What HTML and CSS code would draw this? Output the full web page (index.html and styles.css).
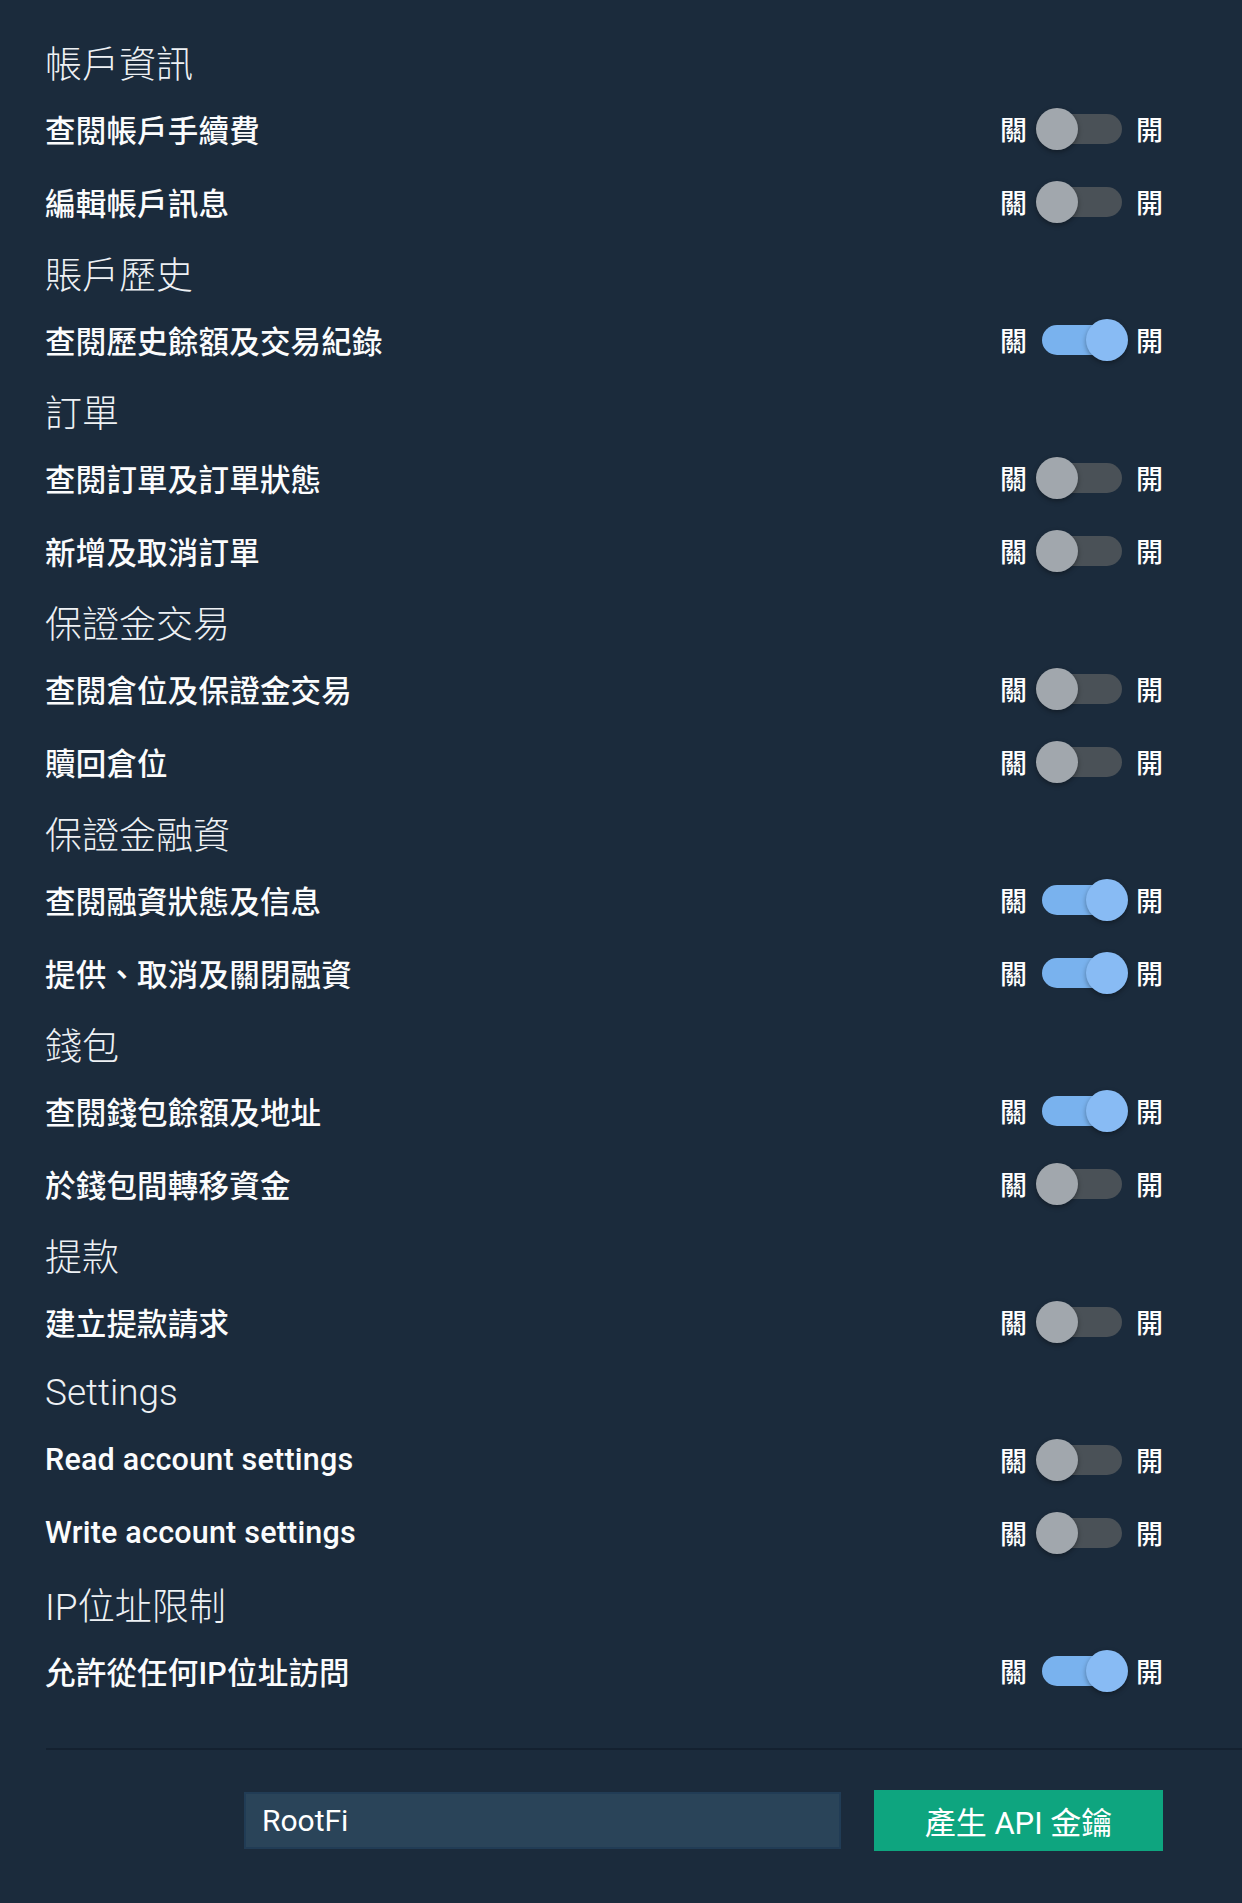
FILE: index.html
```html
<!DOCTYPE html>
<html lang="zh-Hant">

<head>
    <meta charset="UTF-8">
    <meta name="viewport" content="width=device-width, initial-scale=1.0">
    <title>API 金鑰權限</title>
    <link rel="stylesheet" href="styles.css">
</head>

<body>
    <div class="perms">
        <h2 class="group-title">帳戶資訊</h2>
        <div class="perm">
            <span class="perm-name">查閱帳戶手續費</span>
            <div class="switch"><span class="switch-label">關</span><span class="toggle"><span class="knob"></span></span><span class="switch-label">開</span></div>
        </div>
        <div class="perm">
            <span class="perm-name">編輯帳戶訊息</span>
            <div class="switch"><span class="switch-label">關</span><span class="toggle"><span class="knob"></span></span><span class="switch-label">開</span></div>
        </div>

        <h2 class="group-title">賬戶歷史</h2>
        <div class="perm">
            <span class="perm-name">查閱歷史餘額及交易紀錄</span>
            <div class="switch"><span class="switch-label">關</span><span class="toggle on"><span class="knob"></span></span><span class="switch-label">開</span></div>
        </div>

        <h2 class="group-title">訂單</h2>
        <div class="perm">
            <span class="perm-name">查閱訂單及訂單狀態</span>
            <div class="switch"><span class="switch-label">關</span><span class="toggle"><span class="knob"></span></span><span class="switch-label">開</span></div>
        </div>
        <div class="perm">
            <span class="perm-name">新增及取消訂單</span>
            <div class="switch"><span class="switch-label">關</span><span class="toggle"><span class="knob"></span></span><span class="switch-label">開</span></div>
        </div>

        <h2 class="group-title">保證金交易</h2>
        <div class="perm">
            <span class="perm-name">查閱倉位及保證金交易</span>
            <div class="switch"><span class="switch-label">關</span><span class="toggle"><span class="knob"></span></span><span class="switch-label">開</span></div>
        </div>
        <div class="perm">
            <span class="perm-name">贖回倉位</span>
            <div class="switch"><span class="switch-label">關</span><span class="toggle"><span class="knob"></span></span><span class="switch-label">開</span></div>
        </div>

        <h2 class="group-title">保證金融資</h2>
        <div class="perm">
            <span class="perm-name">查閱融資狀態及信息</span>
            <div class="switch"><span class="switch-label">關</span><span class="toggle on"><span class="knob"></span></span><span class="switch-label">開</span></div>
        </div>
        <div class="perm">
            <span class="perm-name">提供、取消及關閉融資</span>
            <div class="switch"><span class="switch-label">關</span><span class="toggle on"><span class="knob"></span></span><span class="switch-label">開</span></div>
        </div>

        <h2 class="group-title">錢包</h2>
        <div class="perm">
            <span class="perm-name">查閱錢包餘額及地址</span>
            <div class="switch"><span class="switch-label">關</span><span class="toggle on"><span class="knob"></span></span><span class="switch-label">開</span></div>
        </div>
        <div class="perm">
            <span class="perm-name">於錢包間轉移資金</span>
            <div class="switch"><span class="switch-label">關</span><span class="toggle"><span class="knob"></span></span><span class="switch-label">開</span></div>
        </div>

        <h2 class="group-title">提款</h2>
        <div class="perm">
            <span class="perm-name">建立提款請求</span>
            <div class="switch"><span class="switch-label">關</span><span class="toggle"><span class="knob"></span></span><span class="switch-label">開</span></div>
        </div>

        <h2 class="group-title">Settings</h2>
        <div class="perm">
            <span class="perm-name">Read account settings</span>
            <div class="switch"><span class="switch-label">關</span><span class="toggle"><span class="knob"></span></span><span class="switch-label">開</span></div>
        </div>
        <div class="perm">
            <span class="perm-name">Write account settings</span>
            <div class="switch"><span class="switch-label">關</span><span class="toggle"><span class="knob"></span></span><span class="switch-label">開</span></div>
        </div>

        <h2 class="group-title">IP位址限制</h2>
        <div class="perm">
            <span class="perm-name">允許從任何IP位址訪問</span>
            <div class="switch"><span class="switch-label">關</span><span class="toggle on"><span class="knob"></span></span><span class="switch-label">開</span></div>
        </div>
    </div>

    <div class="divider"></div>

    <div class="key-form">
        <input class="key-name" type="text" value="RootFi">
        <a href="#" class="button-generate">產生 API 金鑰</a>
    </div>
</body>

</html>
```

FILE: styles.css
```css
body {
    background-color: #1b2b3c;
    color: #fff;
    font-family: Roboto, "Noto Sans CJK TC", sans-serif;
    margin: 0;
    padding: 0;
    min-height: 1903px;
}

.perms {
    padding: 29px 79px 0 45px;
}

.group-title {
    height: 65px;
    margin: 0;
    display: flex;
    align-items: center;
    font-size: 37px;
    font-weight: 300;
    color: #eef1f4;
}

.perm {
    box-sizing: border-box;
    height: 73px;
    padding-bottom: 4px;
    display: flex;
    align-items: center;
    justify-content: space-between;
}

.perm-name {
    font-size: 30.5px;
    font-weight: 500;
    letter-spacing: 0.2px;
    color: #fbfcfd;
}

.switch {
    display: flex;
    align-items: center;
}

.switch-label {
    font-size: 27px;
    font-weight: 500;
    color: #fff;
}

.toggle {
    position: relative;
    width: 80px;
    height: 30px;
    margin: 0 14px 0 15px;
    border-radius: 15px;
    background-color: #4a5157;
}

.knob {
    position: absolute;
    top: -6px;
    left: -6px;
    width: 42px;
    height: 42px;
    border-radius: 50%;
    background-color: #a1a7ad;
    box-shadow: 0 2px 5px rgba(0, 0, 0, 0.35);
}

.toggle.on {
    background-color: #79b2ee;
}

.toggle.on .knob {
    left: auto;
    right: -6px;
    background-color: #88bbf4;
}

.divider {
    height: 2px;
    margin: 39px 0 0 46px;
    background-color: #142130;
}

.key-form {
    display: flex;
    align-items: center;
    justify-content: flex-end;
    gap: 33px;
    padding: 40px 79px 0 0;
}

.key-name {
    box-sizing: border-box;
    width: 597px;
    height: 57px;
    padding: 0 16px;
    border: 2px solid #213c55;
    background-color: #2a4459;
    color: #fff;
    font-family: Roboto, "Noto Sans CJK TC", sans-serif;
    font-size: 30px;
    outline: none;
}

.button-generate {
    width: 289px;
    height: 61px;
    display: flex;
    align-items: center;
    justify-content: center;
    background-color: #0ea57f;
    color: #fff;
    font-size: 31px;
    font-weight: 400;
    text-decoration: none;
}
```
